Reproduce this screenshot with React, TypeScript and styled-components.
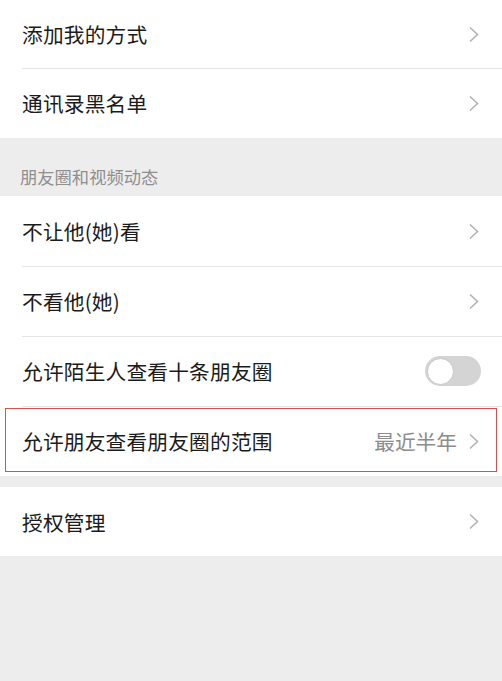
import React from "react";
import styled, { createGlobalStyle } from "styled-components";

const GlobalStyle = createGlobalStyle`
  html, body {
    margin: 0;
    padding: 0;
    background: #ededed;
  }
  body {
    font-family: "Noto Sans CJK SC", "Noto Sans", sans-serif;
  }
`;

const Page = styled.div`
  width: 502px;
  min-height: 681px;
  background: #ededed;
  overflow: hidden;
`;

const Group = styled.div<{ $gapTop?: number }>`
  background: #fff;
  margin-top: ${(p) => p.$gapTop ?? 0}px;
`;

const SectionTitle = styled.div`
  height: 58px;
  box-sizing: border-box;
  padding: 29px 0 0 20px;
  font-size: 17.3px;
  line-height: 20px;
  color: #8f8f8f;
`;

const Row = styled.div<{ $height?: number; $highlight?: boolean }>`
  position: relative;
  height: ${(p) => p.$height ?? 70}px;
  display: flex;
  align-items: center;
  padding: 0 22px 0 22px;
  box-sizing: border-box;

  &::before {
    content: "";
    position: absolute;
    left: 22px;
    right: 0;
    top: 0;
    height: 1px;
    background: #e6e6e6;
  }

  &:first-child::before {
    display: none;
  }

  ${(p) =>
    p.$highlight &&
    `
    &::after {
      content: "";
      position: absolute;
      left: 5px;
      right: 5px;
      top: 2px;
      bottom: 4px;
      border: 1.5px solid #de4c4c;
    }
  `}
`;

const Label = styled.span`
  flex: 1;
  font-size: 20.7px;
  color: #1b1b1b;
  letter-spacing: 0.2px;
`;

const Value = styled.span`
  font-size: 20.7px;
  color: #8c8c8c;
  margin-right: 10px;
`;

const Chevron = styled.svg`
  width: 13px;
  height: 17px;
  flex-shrink: 0;
`;

const Toggle = styled.div`
  width: 56px;
  height: 30px;
  border-radius: 15px;
  background: #d4d4d4;
  position: relative;
  margin-right: -1px;

  &::after {
    content: "";
    position: absolute;
    left: 1.5px;
    top: 1.5px;
    width: 27px;
    height: 27px;
    box-sizing: border-box;
    border-radius: 50%;
    border: 1px solid #c8c8c8;
    background: #fff;
  }
`;

function Arrow() {
  return (
    <Chevron viewBox="0 0 13 17">
      <path d="M3 1.5 L10.5 8.5 L3 15.5" fill="none" stroke="#b3b3b3" strokeWidth="1.6" />
    </Chevron>
  );
}

export default function App() {
  return (
    <Page>
      <GlobalStyle />
      <Group>
        <Row $height={68}>
          <Label>添加我的方式</Label>
          <Arrow />
        </Row>
        <Row>
          <Label>通讯录黑名单</Label>
          <Arrow />
        </Row>
      </Group>

      <SectionTitle>朋友圈和视频动态</SectionTitle>

      <Group>
        <Row>
          <Label>不让他(她)看</Label>
          <Arrow />
        </Row>
        <Row>
          <Label>不看他(她)</Label>
          <Arrow />
        </Row>
        <Row>
          <Label>允许陌生人查看十条朋友圈</Label>
          <Toggle />
        </Row>
        <Row $highlight>
          <Label>允许朋友查看朋友圈的范围</Label>
          <Value>最近半年</Value>
          <Arrow />
        </Row>
      </Group>

      <Group $gapTop={11}>
        <Row $height={69}>
          <Label>授权管理</Label>
          <Arrow />
        </Row>
      </Group>
    </Page>
  );
}
